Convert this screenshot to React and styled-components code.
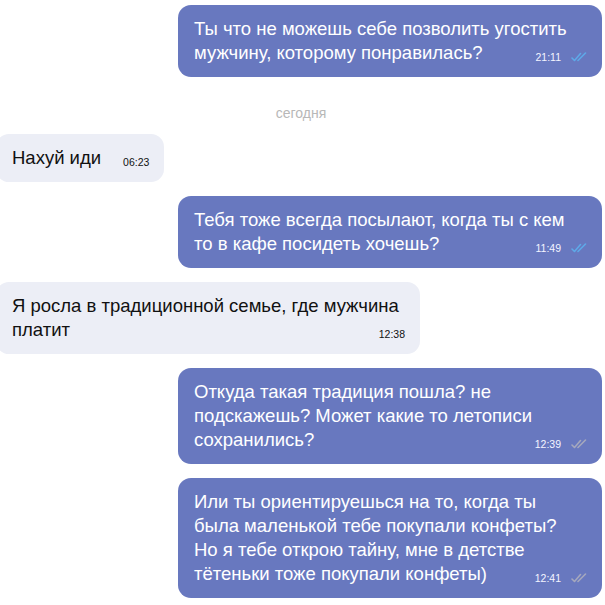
import React from "react";
import styled, { createGlobalStyle } from "styled-components";

const GlobalStyle = createGlobalStyle`
  html, body {
    margin: 0;
    padding: 0;
    background: #ffffff;
    overflow: hidden;
  }
  body {
    font-family: "Liberation Sans", Arial, sans-serif;
  }
`;

const Chat = styled.div`
  width: 605px;
  height: 605px;
  box-sizing: border-box;
  padding: 5px 3px 0 0;
  display: flex;
  flex-direction: column;
  gap: 14px;
  overflow: hidden;
`;

const Row = styled.div`
  display: flex;
  justify-content: ${(p) => (p.$out ? "flex-end" : "flex-start")};
`;

const Bubble = styled.div`
  box-sizing: border-box;
  max-width: 424px;
  margin-left: ${(p) => (p.$out ? "0" : "-4px")};
  padding: ${(p) => (p.$out ? "12px 22px 12px 16px" : "12px 15px 12px 16px")};
  border-radius: 13px;
  background: ${(p) => (p.$out ? "#6878bf" : "#eceef6")};
  color: ${(p) => (p.$out ? "#ffffff" : "#111111")};
  font-size: 18.5px;
  line-height: 24px;
  display: flow-root;
`;

const Meta = styled.span`
  float: right;
  height: 24px;
  margin-left: 22px;
  margin-right: ${(p) => (p.$out ? "-7px" : "0")};
  display: inline-flex;
  align-items: flex-end;
  gap: 10px;
  padding-bottom: 2px;
  box-sizing: border-box;
  font-size: 10.5px;
  line-height: 12px;
  color: ${(p) => (p.$out ? "#f4f5ff" : "#111111")};
`;

const Ticks = styled.svg`
  width: 16px;
  height: 10px;
  margin-bottom: 1px;
`;

const Day = styled.div`
  margin: 12px 0 -3px;
  text-align: center;
  font-size: 14px;
  line-height: 20px;
  color: #b8b8b8;
`;

function Check({ read }) {
  const c = read ? "#5ea9e8" : "#a5a8bd";
  return (
    <Ticks viewBox="0 0 16 10">
      <path d="M1 6 L3.5 8.5 L9.5 1.5" fill="none" stroke={c} strokeWidth="1.6" strokeLinecap="round" strokeLinejoin="round" />
      <path d="M7 8.5 L14.5 1" fill="none" stroke={c} strokeWidth="1.6" strokeLinecap="round" />
    </Ticks>
  );
}

const messages = [
  { out: true, text: "Ты что не можешь себе позволить угостить мужчину, которому понравилась?", time: "21:11", read: true },
  { day: "сегодня" },
  { out: false, text: "Нахуй иди", time: "06:23" },
  { out: true, text: "Тебя тоже всегда посылают, когда ты с кем то в кафе посидеть хочешь?", time: "11:49", read: true },
  { out: false, text: "Я росла в традиционной семье, где мужчина платит", time: "12:38" },
  { out: true, text: "Откуда такая традиция пошла? не подскажешь? Может какие то летописи сохранились?", time: "12:39", read: false },
  { out: true, text: "Или ты ориентируешься на то, когда ты была маленькой тебе покупали конфеты? Но я тебе открою тайну, мне в детстве тётеньки тоже покупали конфеты)", time: "12:41", read: false },
];

export default function App() {
  return (
    <>
      <GlobalStyle />
      <Chat>
        {messages.map((m, i) =>
          m.day ? (
            <Day key={i}>{m.day}</Day>
          ) : (
            <Row key={i} $out={m.out}>
              <Bubble $out={m.out}>
                {m.text}
                <Meta $out={m.out}>
                  {m.time}
                  {m.out && <Check read={m.read} />}
                </Meta>
              </Bubble>
            </Row>
          )
        )}
      </Chat>
    </>
  );
}
